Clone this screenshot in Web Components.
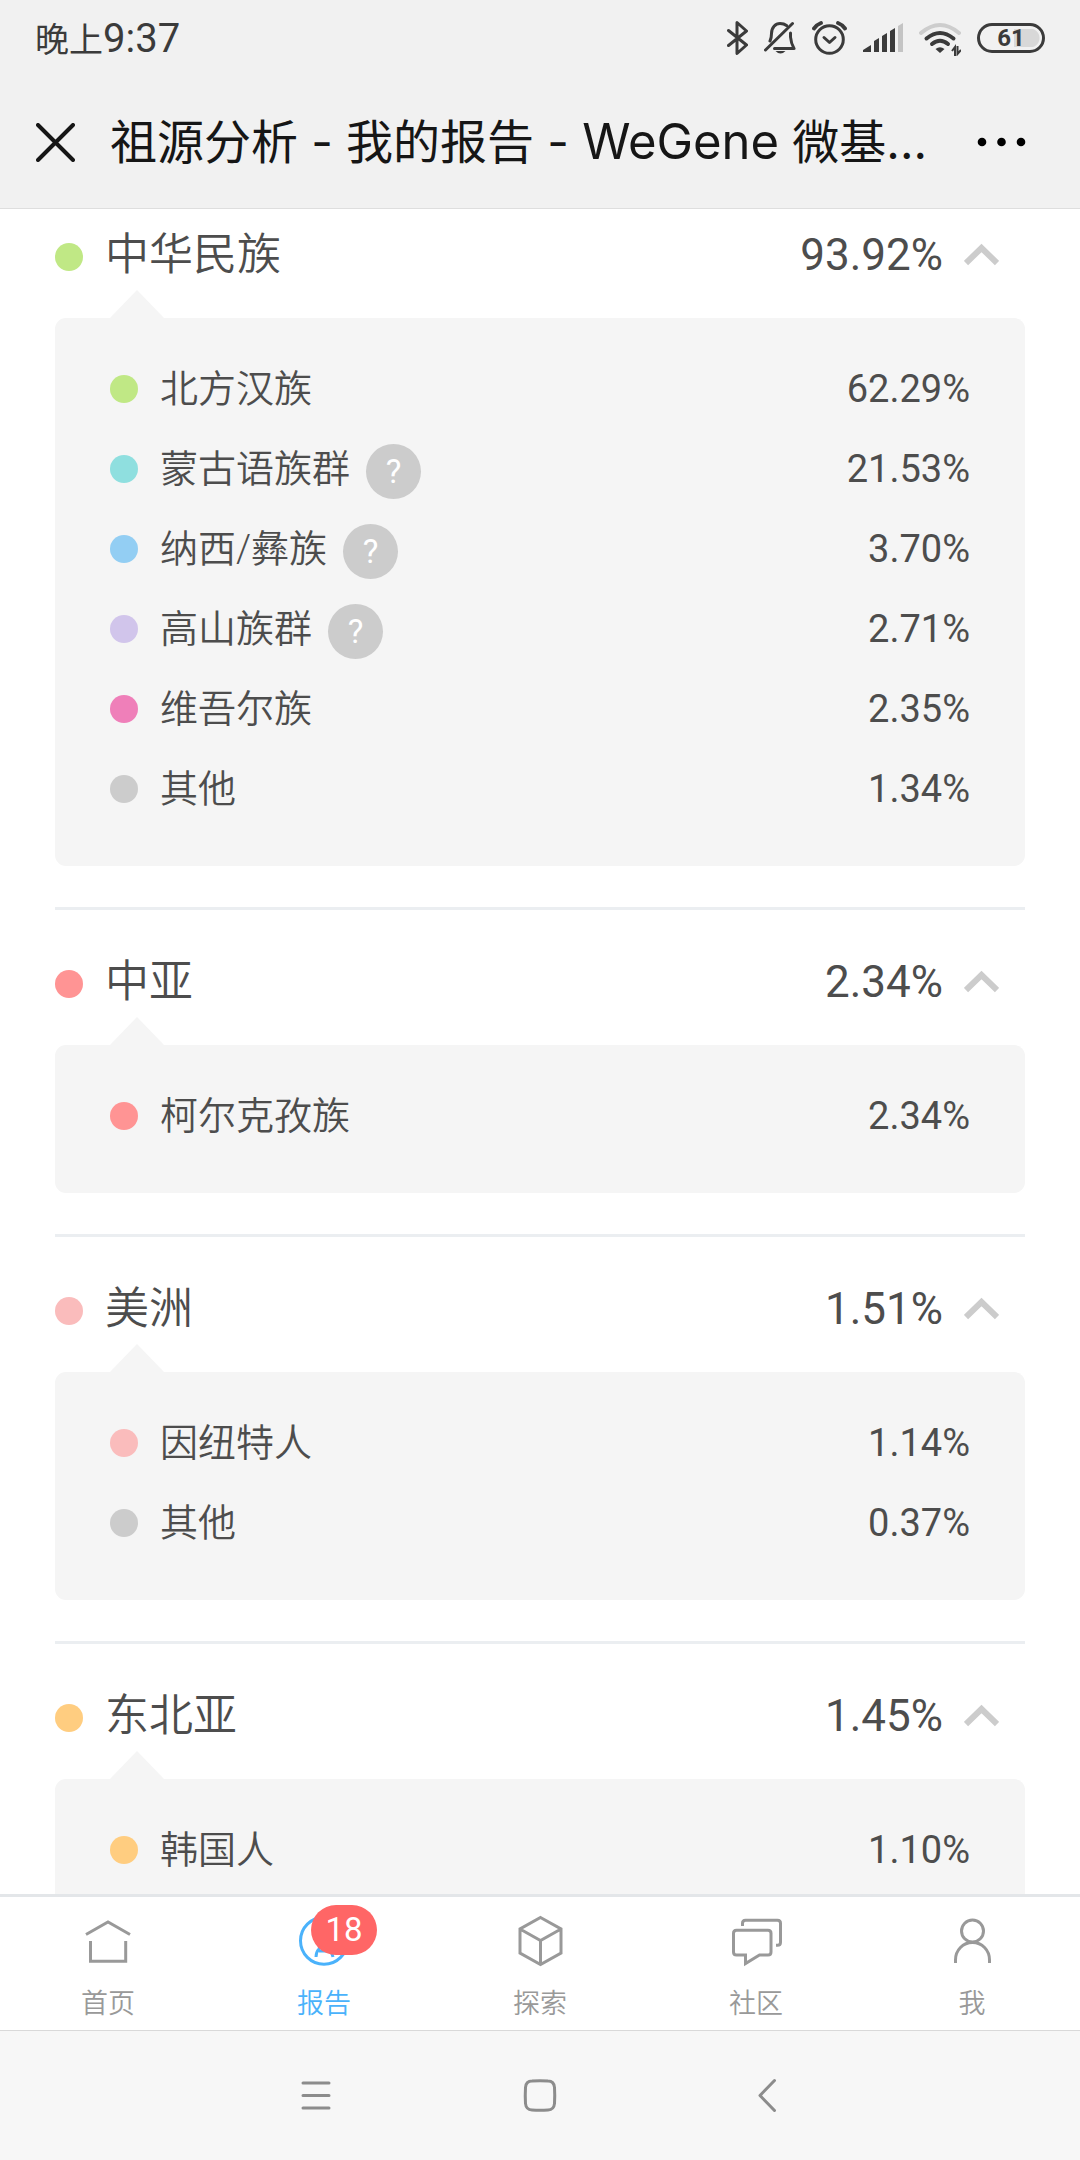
<!DOCTYPE html>
<html lang="zh-CN">
<head>
<meta charset="utf-8">
<meta name="viewport" content="width=device-width, initial-scale=1">
<title>祖源分析 - 我的报告 - WeGene</title>
<style>
  html, body { margin: 0; height: 100%; }
  body {
    display: flex;
    flex-direction: column;
    background: #fff;
    color: #4d4d4d;
    font-family: Roboto, "Noto Sans CJK SC", sans-serif;
    overflow: hidden;
  }
  main { flex: 1; min-height: 0; overflow: hidden; }
</style>
</head>
<body>
<status-bar></status-bar>
<title-bar>祖源分析 - 我的报告 - <span>WeGene</span> 微基...</title-bar>
<main>
  <ancestry-group name="中华民族" percent="93.92%" color="#c0e885">
    <ancestry-row percent="62.29%" color="#c0e885">北方汉族</ancestry-row>
    <ancestry-row percent="21.53%" color="#8fdfdf" help>蒙古语族群</ancestry-row>
    <ancestry-row percent="3.70%" color="#93cef3" help>纳西/彝族</ancestry-row>
    <ancestry-row percent="2.71%" color="#d1c5eb" help>高山族群</ancestry-row>
    <ancestry-row percent="2.35%" color="#ef7fb9">维吾尔族</ancestry-row>
    <ancestry-row percent="1.34%" color="#cccccc">其他</ancestry-row>
  </ancestry-group>
  <ancestry-group name="中亚" percent="2.34%" color="#ff9494">
    <ancestry-row percent="2.34%" color="#ff9494">柯尔克孜族</ancestry-row>
  </ancestry-group>
  <ancestry-group name="美洲" percent="1.51%" color="#fabcbc">
    <ancestry-row percent="1.14%" color="#fabcbc">因纽特人</ancestry-row>
    <ancestry-row percent="0.37%" color="#cccccc">其他</ancestry-row>
  </ancestry-group>
  <ancestry-group name="东北亚" percent="1.45%" color="#ffcd80">
    <ancestry-row percent="1.10%" color="#ffcd80">韩国人</ancestry-row>
  </ancestry-group>
</main>
<tab-bar>
  <tab-item icon="home">首页</tab-item>
  <tab-item icon="report" badge="18" active>报告</tab-item>
  <tab-item icon="cube">探索</tab-item>
  <tab-item icon="chat">社区</tab-item>
  <tab-item icon="me">我</tab-item>
</tab-bar>
<system-nav></system-nav>

<script>
function define(name, render) {
  customElements.define(name, class extends HTMLElement {
    constructor() {
      super();
      this.attachShadow({ mode: 'open' });
    }
    connectedCallback() {
      this.shadowRoot.innerHTML = render(this);
    }
  });
}

const buttonReset = `
  *, *::before { box-sizing: border-box; }
  button { margin: 0; padding: 0; border: 0; background: none; color: inherit; font: inherit; cursor: pointer; }
  svg { display: block; flex: none; }
`;

define('status-bar', () => `
  <style>
    ${buttonReset}
    :host { display: flex; align-items: center; justify-content: space-between; height: 76px; padding: 0 35px; background: #f1f1f1; color: #3b3b3b; }
    .time { padding-top: 2px; font-size: 34px; line-height: 40px; }
    .clock { font-size: 40px; }
    .icons { display: flex; align-items: center; gap: 16px; }
    .battery { display: flex; align-items: center; justify-content: center; width: 68px; height: 30px; border: 3px solid #3b3b3b; border-radius: 15px; font: 700 24px/24px Roboto, sans-serif;
      background: radial-gradient(circle at 0 50%, #d8d8d8 9px, transparent 10px) no-repeat 50px 50% / 10px 18px, linear-gradient(#d8d8d8, #d8d8d8) no-repeat 34px 50% / 16px 18px; }
  </style>
  <div class="time">晚上<span class="clock">9:37</span></div>
  <div class="icons">
    <svg width="21" height="36" viewBox="727 20 21 36" fill="none" stroke="#3b3b3b" stroke-width="3" stroke-linejoin="round" stroke-linecap="round"><path d="M728.5 30.500l18 14.500-9.500 8.500v-31l9.500 8.500-18 14.500"/></svg>
    <svg width="32" height="36" viewBox="764 20 32 36" fill="none" stroke="#3b3b3b" stroke-width="3" stroke-linecap="round" stroke-linejoin="round"><path d="M765.500 50l27-26.500M770 41q1.500-3 1.500-7.500c0-6 4-10 8.500-10q4 0 6.500 2M790.500 33v4q.5 6 3.500 11.500h-19.500"/><path d="M775.500 51h10q-5 5-10 0z" fill="#3b3b3b" stroke="none"/></svg>
    <svg width="35" height="36" viewBox="812 20 35 36" fill="none" stroke="#3b3b3b" stroke-width="3" stroke-linecap="round" stroke-linejoin="round"><circle cx="829.500" cy="39.500" r="13.800"/><path d="M824 37.500l5.500 5 5.500-5"/><path stroke-width="3.800" d="M814 28.500q3-4 7-5.500M845 28.500q-3-4-7-5.500"/></svg>
    <svg width="40" height="36" viewBox="863 20 40 36" fill="#3b3b3b"><path d="M863 52v-2l8-5v7zM874 52V41l5-3v14zM882 52V36l5-3v19zM890 52V31l5-3v24z"/><path fill="#c4c4c4" d="M898 52V26l5-3v29z"/></svg>
    <svg width="42" height="36" viewBox="919 20 42 36" fill="none" stroke-width="4" stroke-linecap="round"><path stroke="#cdcdcd" d="M921 33q19-16 38 0"/><path stroke="#3b3b3b" d="M926.500 38.500q13.500-11 27 0M932 44q8-6.500 16 0"/><path fill="#3b3b3b" d="M935.500 49q4.500-3.500 9 0l-4.500 4z"/><path stroke="#3b3b3b" stroke-width="2" stroke-linecap="butt" d="M952 51l3-4v9M961 50l-3.500 4v-8"/></svg>
    <div class="battery">61</div>
  </div>
`);

define('title-bar', () => `
  <style>
    ${buttonReset}
    :host { display: flex; align-items: center; height: 132px; padding: 0 36px; border-bottom: 1px solid #dedede; background: #f1f1f1; color: #161616; }
    h1 { flex: 1; min-width: 0; margin: 0 0 0 35px; overflow: hidden; font: 400 47px/64px Inter, "Noto Sans CJK SC", sans-serif; white-space: nowrap; }
    ::slotted(span) { font-size: 49px; }
    .more { padding: 16px 18px; }
  </style>
  <button aria-label="关闭"><svg width="39" height="39" viewBox="0 0 39 39" stroke="#161616" stroke-width="4" stroke-linecap="round"><path d="M2 2l35 35M37 2L2 37"/></svg></button>
  <h1><slot></slot></h1>
  <button class="more" aria-label="更多"><svg width="50" height="10" viewBox="0 0 50 10"><circle cx="6" cy="5" r="4.300"/><circle cx="25.500" cy="5" r="4.300"/><circle cx="45" cy="5" r="4.300"/></svg></button>
`);

define('ancestry-group', (el) => `
  <style>
    ${buttonReset}
    :host { display: block; margin: 0 55px 41px; }
    :host(:not(:first-child)) { border-top: 3px solid #ebeef1; }
    button { display: flex; align-items: center; width: 100%; padding: 40px 26px 31px 0; font-size: 44px; line-height: 64px; }
    :host(:first-child) button { padding-top: 14px; }
    .dot { width: 28px; height: 28px; margin: 4px 22px 0 0; border-radius: 50%; background: ${el.getAttribute('color')}; }
    .name { flex: 1; text-align: left; font-weight: 350; }
    svg { margin-left: 21px; }
    .panel { position: relative; padding: 31px 55px 37px; border-radius: 11px; background: #f5f5f5; }
    .panel::before { content: ""; position: absolute; left: 55px; bottom: 100%; border: solid transparent; border-width: 0 27px 28px; border-bottom-color: #f5f5f5; }
  </style>
  <button aria-expanded="true">
    <span class="dot"></span>
    <span class="name">${el.getAttribute('name')}</span>
    <span>${el.getAttribute('percent')}</span>
    <svg width="35" height="24" viewBox="0 0 35 24" fill="none" stroke="#ccc" stroke-width="6"><path d="M2 20L17.500 5 33 20"/></svg>
  </button>
  <div class="panel"><slot></slot></div>
`);

define('ancestry-row', (el) => `
  <style>
    ${buttonReset}
    :host { display: flex; align-items: center; height: 80px; font-size: 38px; line-height: 56px; }
    .dot { width: 28px; height: 28px; margin-right: 22px; border-radius: 50%; background: ${el.getAttribute('color')}; }
    .name { font-weight: 350; }
    button { width: 55px; height: 55px; margin: 4px 0 0 16px; border-radius: 50%; background: #ccc; color: #fff; font-size: 33px; line-height: 55px; }
    .percent { margin-left: auto; }
  </style>
  <span class="dot"></span>
  <span class="name"><slot></slot></span>
  ${el.hasAttribute('help') ? '<button aria-label="说明">?</button>' : ''}
  <span class="percent">${el.getAttribute('percent')}</span>
`);

define('tab-bar', () => `
  <style>
    :host { display: block; border-top: 3px solid #e3e6e9; background: #fff; }
    nav { display: grid; grid-auto-flow: column; grid-auto-columns: 1fr; }
  </style>
  <nav><slot></slot></nav>
`);

const tabIcons = {
  home: '<path d="M5 20.500L27 8l22 12.500M9.500 27v20.300h35.200V27"/>',
  report: '<circle cx="27" cy="26.700" r="23.500"/><path d="M19 43q0-5 3-8l5-20 5 20q3 3 4 8M22 37h10"/>',
  cube: '<path d="M27.500 3.500L48 15v24L27.500 50.500 7 39V15zM7 15l20.500 11.500L48 15M27.500 26.500v24"/>',
  chat: '<path d="M7.500 16.300H39q3 0 3 3V38q0 3-3 3h-8.500l-14 8.500V41h-9q-3 0-3-3V19.300q0-3 3-3zM13.500 12V9.300q0-3 3-3h32q3 0 3 3v19q0 3-3 3H47"/>',
  me: '<circle cx="27.500" cy="17" r="11"/><path d="M10.500 49v-3c0-10 7.500-17.500 17-17.500s17 7.500 17 17.500v3"/>'
};

define('tab-item', (el) => `
  <style>
    ${buttonReset}
    :host { display: block; color: #999; }
    :host([active]) { color: #4ab2fb; }
    a { display: flex; flex-direction: column; align-items: center; padding: 17px 0 8px; color: inherit; text-decoration: none; }
    .icon { position: relative; margin-bottom: 18px; }
    .label { font-size: 27px; font-weight: 350; line-height: 36px; }
    .badge { position: absolute; left: 14px; top: -9px; width: 66px; height: 50px; border-radius: 25px; background: #f66; color: #fff; font-size: 33px; line-height: 50px; text-align: center; }
  </style>
  <a href="#${el.getAttribute('icon')}">
    <span class="icon">
      <svg width="54" height="54" viewBox="0 0 54 54" fill="none" stroke="currentColor" stroke-width="3">${tabIcons[el.getAttribute('icon')]}</svg>
      ${el.hasAttribute('badge') ? `<span class="badge">${el.getAttribute('badge')}</span>` : ''}
    </span>
    <span class="label"><slot></slot></span>
  </a>
`);

define('system-nav', () => `
  <style>
    ${buttonReset}
    :host { display: flex; justify-content: center; height: 130px; border-top: 1px solid #d9d9d9; box-sizing: border-box; background: #f7f7f7; }
    button { display: flex; align-items: center; justify-content: center; width: 21%; }
  </style>
  <button aria-label="菜单"><svg width="36" height="36" viewBox="0 0 36 36" fill="none" stroke="#8c8c8c" stroke-width="3" stroke-linecap="round"><path d="M8 5h26M8 17.500h26M8 30h26"/></svg></button>
  <button aria-label="主屏幕"><svg width="36" height="36" viewBox="0 0 36 36" fill="none" stroke="#8c8c8c" stroke-width="3"><path d="M10 3q8-.5 16 0 6 0 6.500 6.500.5 8 0 16-.5 6-6.500 6.500-8 .5-16 0-6-.5-6.500-6.500-.5-8 0-16Q4 3 10 3z"/></svg></button>
  <button aria-label="返回"><svg width="36" height="36" viewBox="0 0 36 36" fill="none" stroke="#8c8c8c" stroke-width="3" stroke-linecap="round" stroke-linejoin="round"><path d="M25.500 2.500L11 17.500l14.500 15"/></svg></button>
`);
</script>
</body>
</html>
